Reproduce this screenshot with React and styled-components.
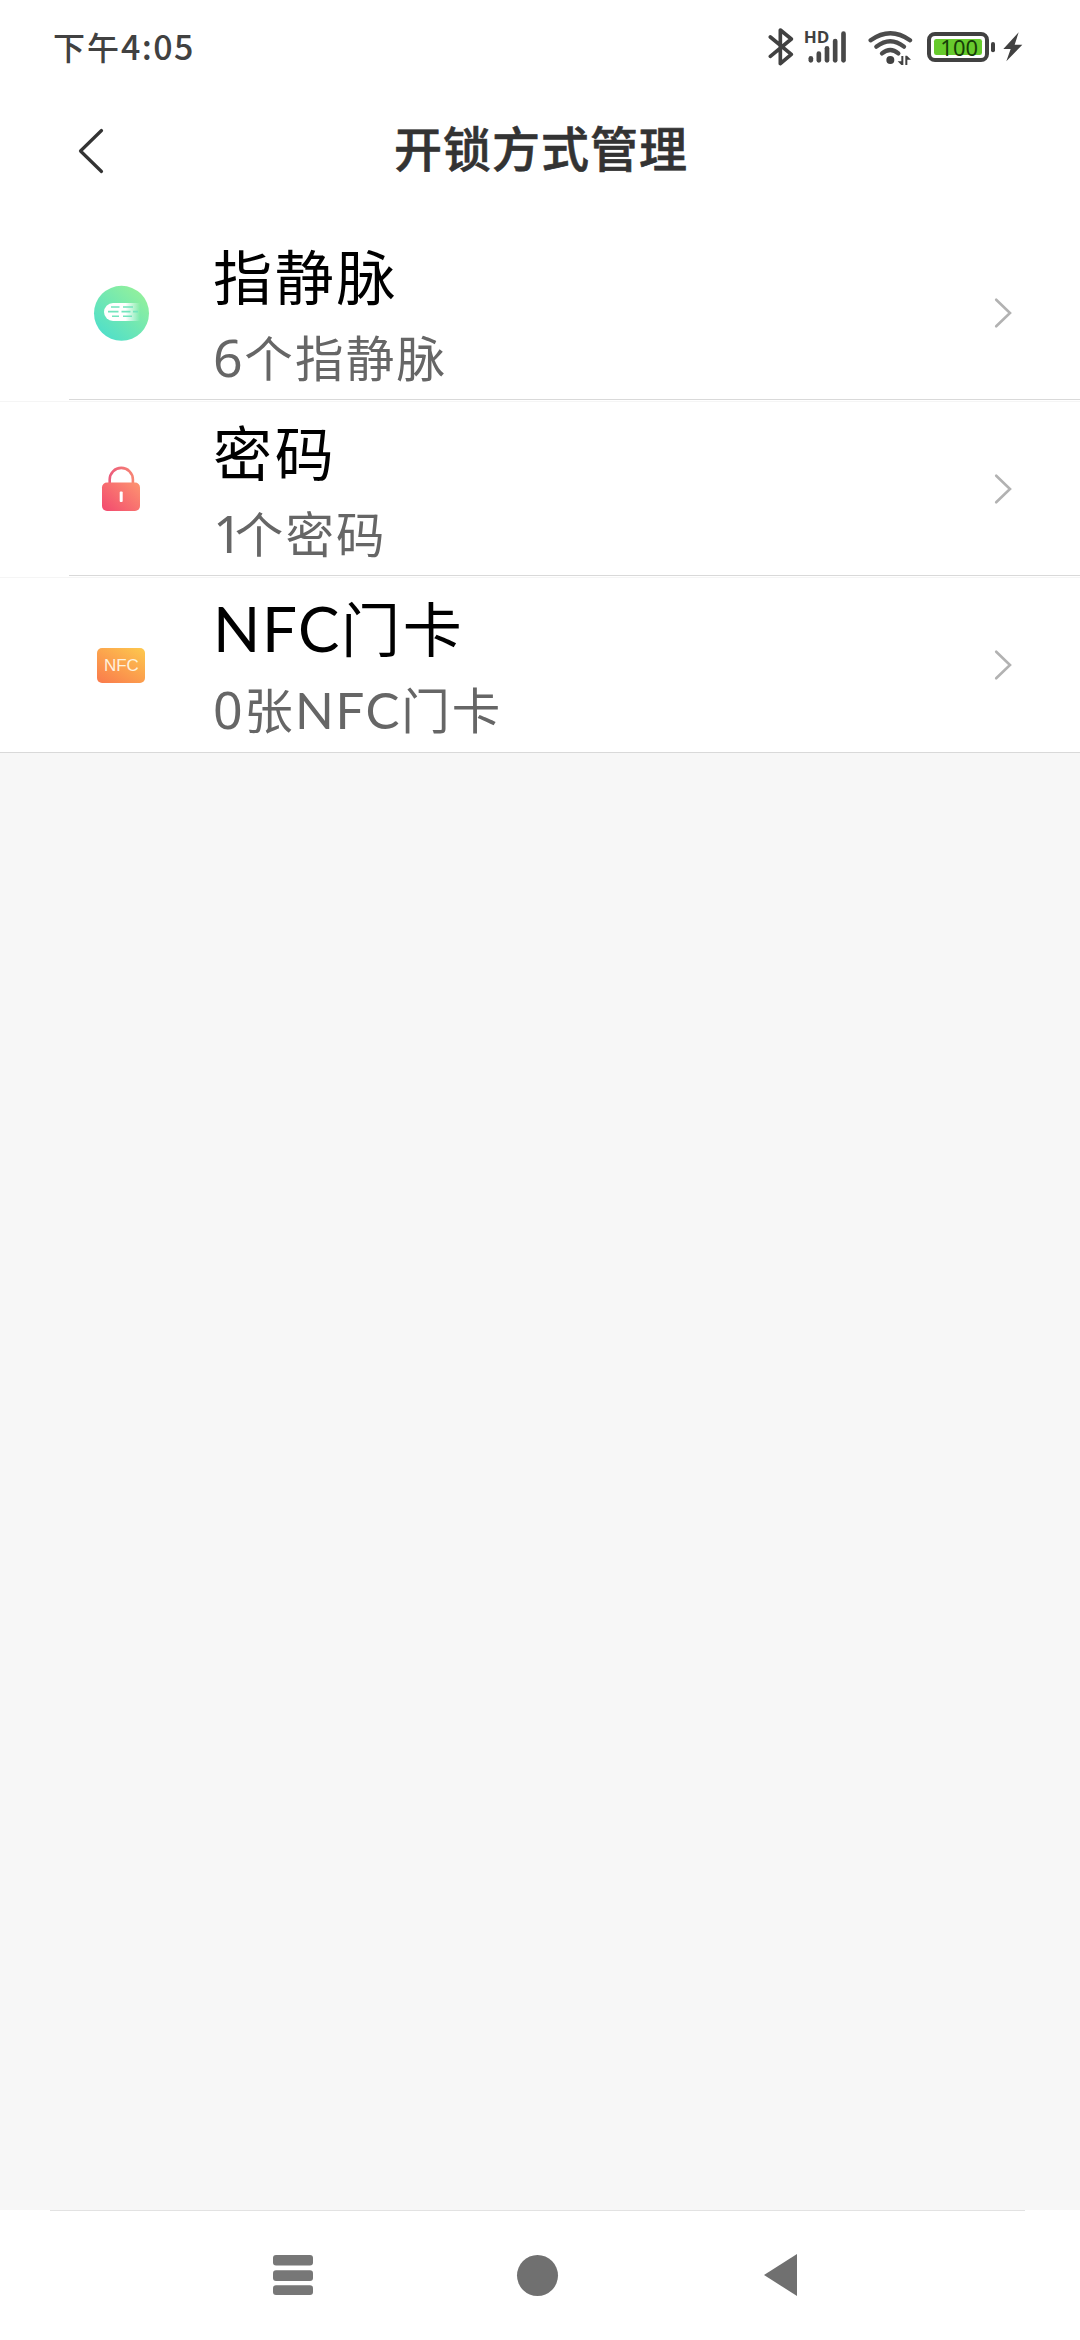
import React from "react"
import styled, { createGlobalStyle } from 'styled-components'

const methods = [
    { icon: <VeinIcon />, latin: "", title: "指静脉", count: "6", unit: "个指静脉" },
    { icon: <LockIcon />, latin: "", title: "密码", count: "1", unit: "个密码" },
    { icon: <NfcIcon />, latin: "NFC", title: "门卡", count: "0", unit: "张", unitLatin: "NFC", unitEnd: "门卡" },
]

export default function App() {
    return <Screen>
        <GlobalStyle />
        <StatusBar>
            <Clock>下午<Digits>4:05</Digits></Clock>
            <StatusIcons />
        </StatusBar>
        <Header>
            <BackButton aria-label="返回">
                <svg width="30" height="48" viewBox="0 0 30 48">
                    <path d="M26.5 3.5 L5.5 24 L26.5 44.5" fill="none" stroke="#333" strokeWidth="3.2" strokeLinecap="round" strokeLinejoin="round" />
                </svg>
            </BackButton>
            <PageTitle>开锁方式管理</PageTitle>
        </Header>
        <List>
            {methods.map((m) => (
                <Row key={m.title}>
                    <IconSlot>{m.icon}</IconSlot>
                    <RowBody>
                        <RowTitle>{m.latin && <Latin>{m.latin}</Latin>}{m.title}</RowTitle>
                        <RowCount>
                            <Num $narrow={m.count === "1"}>{m.count}</Num>{m.unit}
                            {m.unitLatin && <Latin>{m.unitLatin}</Latin>}{m.unitEnd}
                        </RowCount>
                    </RowBody>
                    <svg width="20" height="32" viewBox="0 0 20 32">
                        <path d="M3.2 2.7 L17 16 L3.2 29.3" fill="none" stroke="#b2b2b2" strokeWidth="2.6" strokeLinecap="round" />
                    </svg>
                </Row>
            ))}
        </List>
        <Content />
        <NavBar>
            <NavLine />
            <NavButtons>
                <svg width="40" height="41" viewBox="0 0 40 41">
                    <g fill="#777">
                        <rect y="0" width="40" height="10.4" rx="3" />
                        <rect y="15.3" width="40" height="10.6" rx="3" />
                        <rect y="30.3" width="40" height="9.8" rx="3" />
                    </g>
                </svg>
                <HomeDot />
                <svg width="33" height="42" viewBox="0 0 33 42">
                    <path d="M0 21 L33 0 V42 Z" fill="#707070" />
                </svg>
            </NavButtons>
        </NavBar>
    </Screen>
}

function StatusIcons() {
    return <IconRow>
        <svg width="26" height="42" viewBox="54 45 78 126">
            <path d="M61 81 L124 133 L91 161 V60 L124 87 L61 139" fill="none" stroke="#414141" strokeWidth="11" strokeLinecap="round" strokeLinejoin="round" />
        </svg>
        <SignalIcon width="43" height="42" viewBox="162 45 129 126">
            <text x="161" y="98" textLength="77" lengthAdjust="spacingAndGlyphs">HD</text>
            <g stroke="#484848" strokeWidth="14" strokeLinecap="round">
                <path d="M182.500 145 V151" />
                <path d="M206.500 131 V151" />
                <path d="M231 115 V151" />
                <path d="M255.500 93 V151" />
                <path d="M280.500 71 V151" />
            </g>
        </SignalIcon>
        <WifiIcon width="46" height="42" viewBox="351 45 138 126">
            <path d="M362 91 Q421 49 480 91" />
            <path d="M379 110 Q421 77 462 110" />
            <path d="M396 130 Q421 110 445 130" />
            <circle cx="421" cy="150" r="12" />
            <g className="arrows">
                <path d="M454 138 H460 V165 H454 L443 154 H454 Z" />
                <path d="M466 165 V137 H471 L483 149 H472 V165 Z" />
            </g>
        </WifiIcon>
        <BatteryIcon width="70" height="42" viewBox="528 45 210 126">
            <rect x="537" y="72" width="174" height="78" rx="18" fill="none" stroke="#414141" strokeWidth="12" />
            <rect x="552" y="87" width="144" height="48" rx="7" fill="#67cb2d" />
            <rect x="723" y="96" width="12" height="31" rx="6" fill="#414141" />
            <text x="571" y="137" textLength="113" lengthAdjust="spacingAndGlyphs">100</text>
        </BatteryIcon>
        <svg width="21" height="42" viewBox="756 45 63 126">
            <path d="M806 67 L760 117 H782 L769 154 L817 104 H794 Z" fill="#414141" />
        </svg>
    </IconRow>
}

function VeinIcon() {
    return <svg width="60" height="60" viewBox="0 0 60 60">
        <defs>
            <linearGradient id="vein" x1="0.15" y1="0.9" x2="0.85" y2="0.1">
                <stop offset="0" stopColor="#50dfc9" />
                <stop offset="1" stopColor="#92f09c" />
            </linearGradient>
            <linearGradient id="finger" x1="0" x2="1">
                <stop offset="0.6" stopColor="#fff" />
                <stop offset="1" stopColor="#fff" stopOpacity="0" />
            </linearGradient>
        </defs>
        <circle cx="30.500" cy="30.300" r="27.500" fill="url(#vein)" />
        <path d="M49 20 H22 A9 9 0 0 0 22 38 H49 Z" fill="url(#finger)" />
        <g stroke="#73e5bd" strokeWidth="1.6">
            <path d="M20 24 H28.500 M32 24 H42" />
            <path d="M17 28.600 H27.500 M30.500 28.600 H39.500 M42 28.600 H47" />
            <path d="M21 33.200 H28 M32 33.200 H41" />
        </g>
    </svg>
}

function LockIcon() {
    return <svg width="60" height="60" viewBox="0 0 60 60">
        <defs>
            <linearGradient id="lock" x1="0" y1="1" x2="1" y2="0.2">
                <stop offset="0" stopColor="#f2486f" />
                <stop offset="1" stopColor="#fc8e70" />
            </linearGradient>
            <linearGradient id="shackle" x1="0" x2="1">
                <stop offset="0" stopColor="#ec5c7b" />
                <stop offset="1" stopColor="#f78474" />
            </linearGradient>
        </defs>
        <path d="M18.700 24 V20.500 A11.600 11.600 0 0 1 41.900 20.500 V24" fill="none" stroke="url(#shackle)" strokeWidth="2.6" />
        <rect x="11" y="23.500" width="38" height="28.500" rx="5" fill="url(#lock)" />
        <rect x="28.700" y="32.500" width="3" height="10.500" rx="1" fill="#fff" />
    </svg>
}

function NfcIcon() {
    return <svg width="60" height="60" viewBox="0 0 60 60">
        <defs>
            <linearGradient id="nfc" x1="0.1" y1="1" x2="0.9" y2="0">
                <stop offset="0" stopColor="#fa7d4c" />
                <stop offset="1" stopColor="#fdc64e" />
            </linearGradient>
        </defs>
        <rect x="6" y="13" width="48" height="35" rx="5" fill="url(#nfc)" />
        <text x="12.900" y="36.400" fill="#fff1dc" fontFamily="Liberation Sans, sans-serif" fontSize="17" textLength="35" lengthAdjust="spacingAndGlyphs">NFC</text>
    </svg>
}

const GlobalStyle = createGlobalStyle`
    body {
        margin: 0;
        background: #f7f7f7;
        font-family: "Noto Sans CJK SC", sans-serif;
    }
    svg {
        display: block;
        flex: none;
    }
`

const Screen = styled.div`
    display: flex;
    flex-direction: column;
    width: 1080px;
    height: 2340px;
    overflow: hidden;
    background: #f7f7f7;
`

const StatusBar = styled.div`
    display: flex;
    justify-content: space-between;
    align-items: center;
    flex: none;
    box-sizing: border-box;
    height: 92px;
    padding: 0 57px 0 53px;
    background: #fff;
`

const Clock = styled.div`
    font-size: 32px;
    font-weight: 500;
    line-height: 48px;
    letter-spacing: 2px;
    color: #414141;
`

const Digits = styled.span`
    font-size: 34px;
    letter-spacing: 1.4px;
`

const IconRow = styled.div`
    display: flex;
    align-items: center;
    > :nth-child(2) { margin-left: 10px; }
    > :nth-child(3) { margin-left: 20px; }
    > :nth-child(4) { margin-left: 13px; }
    > :nth-child(5) { margin-left: 6px; }
`

const SignalIcon = styled.svg`
    text {
        font: 700 46px "Open Sans", sans-serif;
        fill: #414141;
    }
`

const WifiIcon = styled.svg`
    fill: none;
    stroke: #4c4c4c;
    stroke-width: 13;
    stroke-linecap: round;
    circle, .arrows {
        fill: #414141;
        stroke: none;
    }
`

const BatteryIcon = styled.svg`
    text {
        font: 400 67px "Noto Sans", sans-serif;
        fill: #163d08;
    }
`

const Header = styled.div`
    display: grid;
    grid-template-columns: 150px 1fr 150px;
    align-items: center;
    flex: none;
    height: 118px;
    padding-bottom: 15px;
    background: #fff;
`

const BackButton = styled.button`
    padding: 0 0 0 75px;
    border: 0;
    background: none;
`

const PageTitle = styled.h1`
    margin: 0 0 10px;
    padding-left: 2px;
    text-align: center;
    font-size: 48px;
    font-weight: 500;
    line-height: 72px;
    letter-spacing: 1px;
    color: #333;
    -webkit-text-stroke: 0.6px #333;
`

const List = styled.div`
    flex: none;
    border-bottom: 1px solid #d9d9d9;
`

const Row = styled.div`
    display: flex;
    align-items: center;
    box-sizing: border-box;
    height: 176px;
    padding: 0 67px 0 91px;
    background: linear-gradient(#d9d9d9, #d9d9d9) 69px 174px / 1011px 1px no-repeat, #fff;
    & + & {
        padding-bottom: 1px;
        border-top: 1px solid #f5f5f5;
        background-position: 69px 173px, 0 0;
    }
    &:last-child {
        height: 175px;
        padding-bottom: 0;
        background: #fff;
    }
`

const IconSlot = styled.div`
    width: 60px;
    height: 60px;
`

const RowBody = styled.div`
    flex: 1;
    padding: 0 0 4px 62px;
    white-space: nowrap;
`

const RowTitle = styled.div`
    height: 89px;
    font-size: 59px;
    line-height: 88px;
    letter-spacing: 2.7px;
    color: #000;
`

const RowCount = styled.div`
    height: 72px;
    font-size: 48.5px;
    line-height: 72px;
    letter-spacing: 2.2px;
    color: #666;
`

const Latin = styled.span`
    font-family: Lato, sans-serif;
    font-size: 1.05em;
    letter-spacing: 1.6px;
`

const Num = styled.span`
    font-family: "Noto Sans", sans-serif;
    font-size: 1.07em;
    letter-spacing: ${props => (props.$narrow ? "-8px" : "1.6px")};
`

const Content = styled.div`
    flex: 1;
`

const NavBar = styled.div`
    flex: none;
    height: 130px;
    background: #fff;
`

const NavLine = styled.div`
    height: 1px;
    margin: 0 55px 0 50px;
    background: #e2e2e2;
`

const NavButtons = styled.div`
    display: flex;
    justify-content: space-between;
    align-items: center;
    height: 42px;
    padding: 43px 283px 0 273px;
`

const HomeDot = styled.div`
    width: 41px;
    height: 41px;
    margin-right: 3px;
    border-radius: 50%;
    background: #707070;
`
